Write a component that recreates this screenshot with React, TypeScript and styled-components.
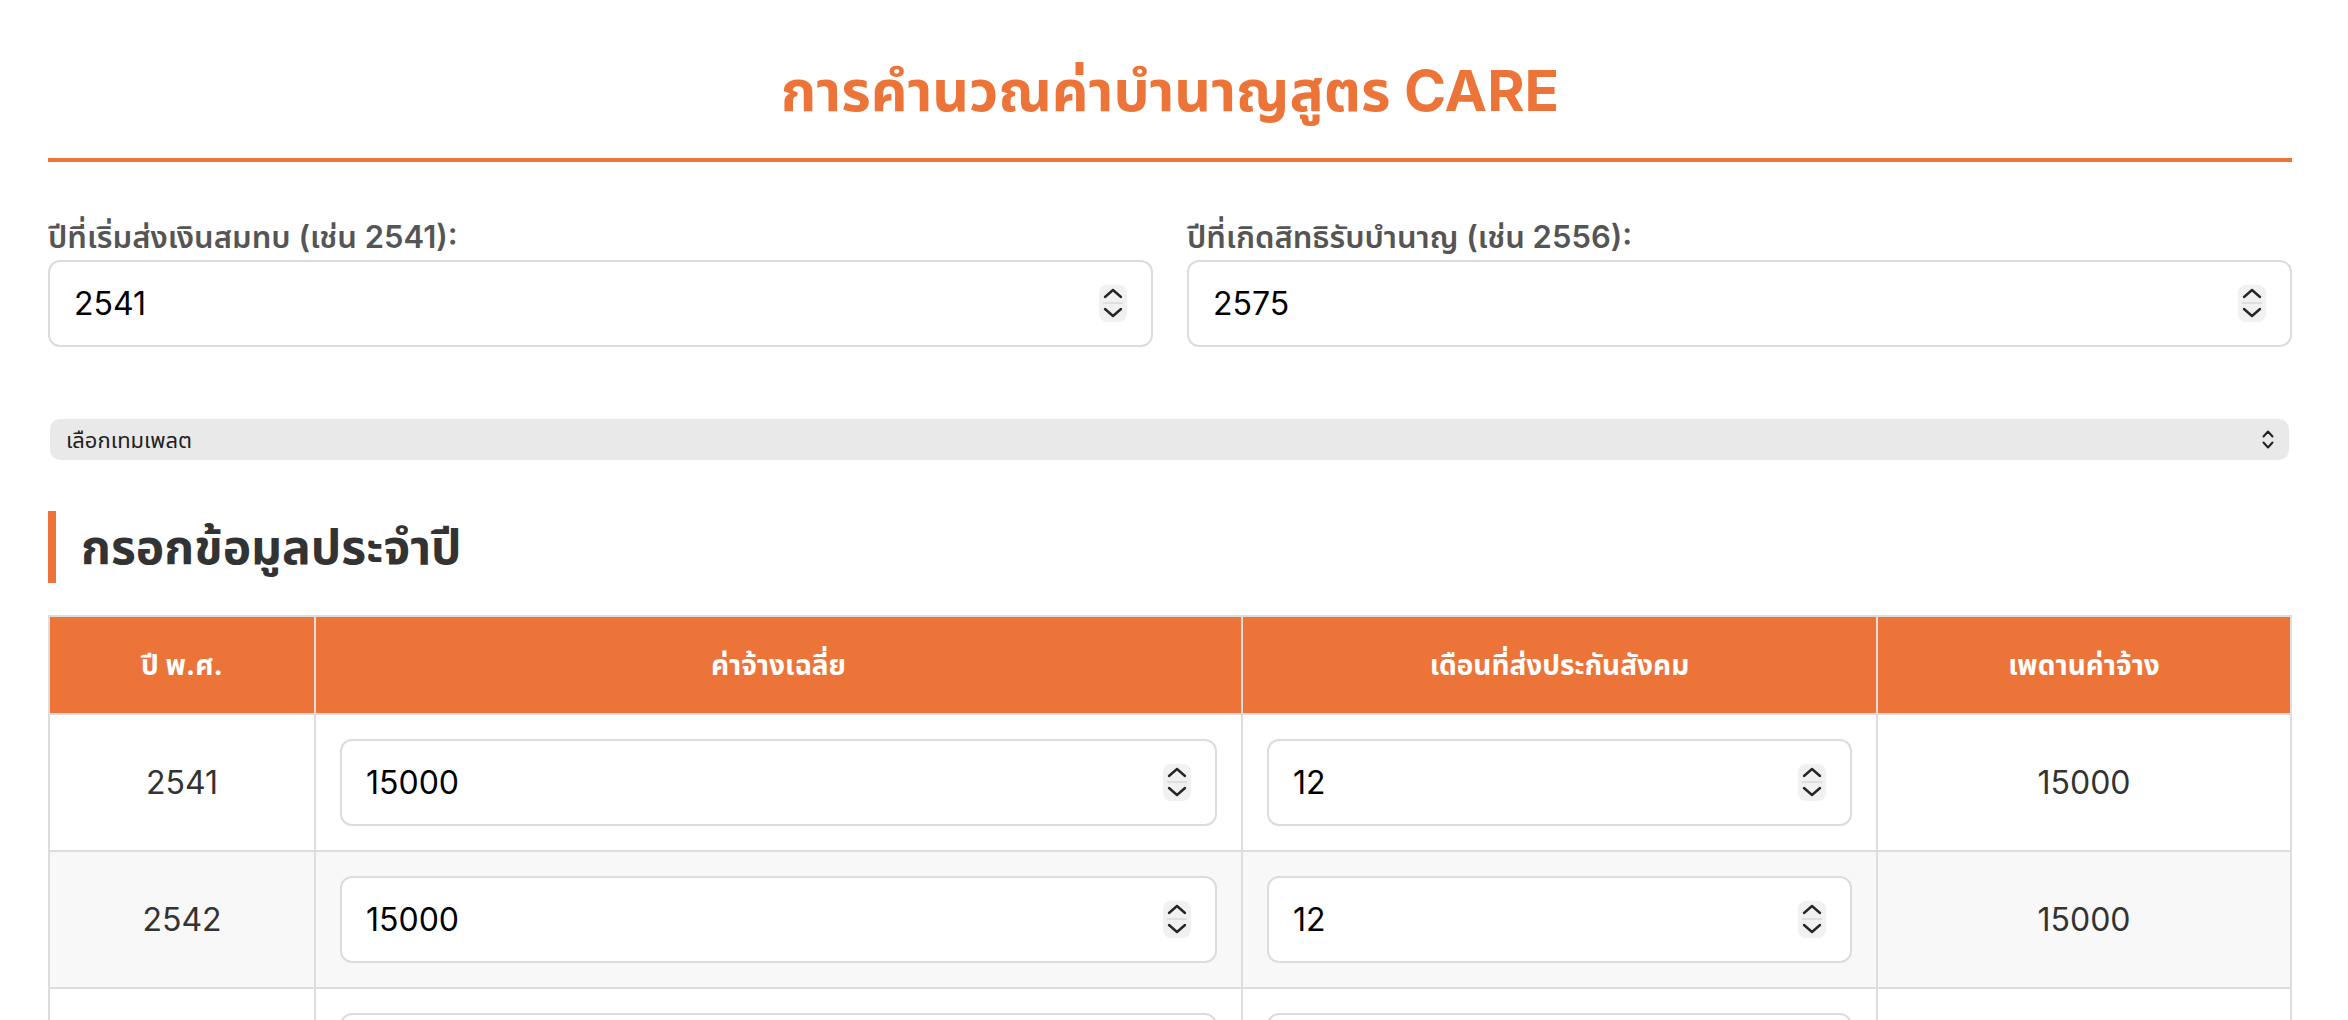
import React from "react";
import styled, { createGlobalStyle } from "styled-components";

const ORANGE = "#ED7438";

const GlobalStyle = createGlobalStyle`
  html { scrollbar-width: none; }
  html::-webkit-scrollbar, body::-webkit-scrollbar { display: none; }
  body {
    margin: 0;
    background: #ffffff;
    font-family: "Inter", "Noto Sans Thai", "Noto Sans", sans-serif;
    color: #333;
  }
  * { box-sizing: border-box; }
`;

const Page = styled.div`
  padding: 0 56px 40px 48px;
`;

const Title = styled.h1`
  margin: 57px 0 0;
  padding-bottom: 34px;
  border-bottom: 4px solid ${ORANGE};
  text-align: center;
  color: ${ORANGE};
  font-size: 57px;
  line-height: 67px;
  font-weight: 700;
`;

const YearGrid = styled.div`
  display: grid;
  grid-template-columns: 1fr 1fr;
  column-gap: 34px;
  margin-top: 57px;
`;

const Field = styled.div`
  display: flex;
  flex-direction: column;
  gap: 5px;
`;

const Label = styled.label`
  font-size: 31px;
  line-height: 36px;
  font-weight: 600;
  color: #555;
`;

const NumberBox = styled.div<{ $height?: number }>`
  display: flex;
  align-items: center;
  height: ${(p) => p.$height ?? 87}px;
  padding: 0 24px;
  border: 2px solid #dcdcdc;
  border-radius: 12px;
  background: #fff;
`;

const NumberInput = styled.input`
  flex: 1;
  min-width: 0;
  border: none;
  outline: none;
  background: transparent;
  font-family: "Inter", "Noto Sans", sans-serif;
  font-size: 32px;
  color: #000;
  padding: 0;
  -moz-appearance: textfield;
  appearance: textfield;
  &::-webkit-outer-spin-button,
  &::-webkit-inner-spin-button {
    -webkit-appearance: none;
    margin: 0;
  }
`;

const SelectRow = styled.div`
  display: flex;
  align-items: center;
  height: 41px;
  margin: 72px 3px 0 2px;
  padding: 0 15px 0 16px;
  background: #e9e9e9;
  border-radius: 10px;
`;

const TemplateSelect = styled.select`
  flex: 1;
  appearance: none;
  -webkit-appearance: none;
  border: none;
  outline: none;
  background: transparent;
  font-family: "Inter", "Noto Sans Thai", sans-serif;
  font-size: 22px;
  color: #222;
  padding: 0;
`;

const SectionTitle = styled.h2`
  margin: 51px 0 0;
  padding-left: 25px;
  border-left: 8px solid ${ORANGE};
  font-size: 48px;
  line-height: 72px;
  font-weight: 700;
  color: #333;
`;

const Table = styled.table`
  width: 100%;
  margin-top: 32px;
  border-collapse: collapse;
  table-layout: fixed;
`;

const HeadCell = styled.th`
  background: ${ORANGE};
  color: #fff;
  font-size: 28px;
  line-height: 36px;
  font-weight: 700;
  padding: 30px 10px;
  border: 2px solid #dddddd;
  text-align: center;
`;

const Row = styled.tr<{ $striped: boolean }>`
  background: ${(p) => (p.$striped ? "#f8f8f8" : "#ffffff")};
`;

const Cell = styled.td<{ $center?: boolean }>`
  border: 2px solid #dddddd;
  padding: 24px;
  font-size: 32px;
  color: #333;
  text-align: ${(p) => (p.$center ? "center" : "left")};
`;

const Spinner = () => (
  <svg width="28" height="37" viewBox="0 0 28 37" style={{ flexShrink: 0 }}>
    <rect x="0" y="0" width="28" height="37" rx="8" fill="#f1f1f1" />
    <path d="M6 12 L14 5 L22 12" fill="none" stroke="#262626" strokeWidth="2.4" strokeLinecap="round" strokeLinejoin="round" />
    <path d="M4 18 H24" stroke="#d8d8d8" strokeWidth="1.5" />
    <path d="M6 24 L14 31 L22 24" fill="none" stroke="#262626" strokeWidth="2.4" strokeLinecap="round" strokeLinejoin="round" />
  </svg>
);

const SelectChevrons = () => (
  <svg width="12" height="19" viewBox="0 0 12 19" style={{ flexShrink: 0 }}>
    <path d="M1.5 6.5 L6 1.5 L10.5 6.5" fill="none" stroke="#222" strokeWidth="2" strokeLinecap="round" strokeLinejoin="round" />
    <path d="M1.5 12.5 L6 17.5 L10.5 12.5" fill="none" stroke="#222" strokeWidth="2" strokeLinecap="round" strokeLinejoin="round" />
  </svg>
);

const NumberField = ({ value }: { value: string }) => (
  <NumberBox>
    <NumberInput type="number" defaultValue={value} />
    <Spinner />
  </NumberBox>
);

const years = Array.from({ length: 35 }, (_, i) => 2541 + i);

export default function App() {
  return (
    <>
      <GlobalStyle />
      <Page>
        <Title>การคำนวณค่าบำนาญสูตร CARE</Title>
        <YearGrid>
          <Field>
            <Label>ปีที่เริ่มส่งเงินสมทบ (เช่น 2541):</Label>
            <NumberField value="2541" />
          </Field>
          <Field>
            <Label>ปีที่เกิดสิทธิรับบำนาญ (เช่น 2556):</Label>
            <NumberField value="2575" />
          </Field>
        </YearGrid>
        <SelectRow>
          <TemplateSelect defaultValue="">
            <option value="">เลือกเทมเพลต</option>
          </TemplateSelect>
          <SelectChevrons />
        </SelectRow>
        <SectionTitle>กรอกข้อมูลประจำปี</SectionTitle>
        <Table>
          <colgroup>
            <col style={{ width: 266 }} />
            <col style={{ width: 927 }} />
            <col style={{ width: 635 }} />
            <col />
          </colgroup>
          <thead>
            <tr>
              <HeadCell>ปี พ.ศ.</HeadCell>
              <HeadCell>ค่าจ้างเฉลี่ย</HeadCell>
              <HeadCell>เดือนที่ส่งประกันสังคม</HeadCell>
              <HeadCell>เพดานค่าจ้าง</HeadCell>
            </tr>
          </thead>
          <tbody>
            {years.map((y, i) => (
              <Row key={y} $striped={i % 2 === 1}>
                <Cell $center>{y}</Cell>
                <Cell>
                  <NumberField value="15000" />
                </Cell>
                <Cell>
                  <NumberField value="12" />
                </Cell>
                <Cell $center>15000</Cell>
              </Row>
            ))}
          </tbody>
        </Table>
      </Page>
    </>
  );
}
